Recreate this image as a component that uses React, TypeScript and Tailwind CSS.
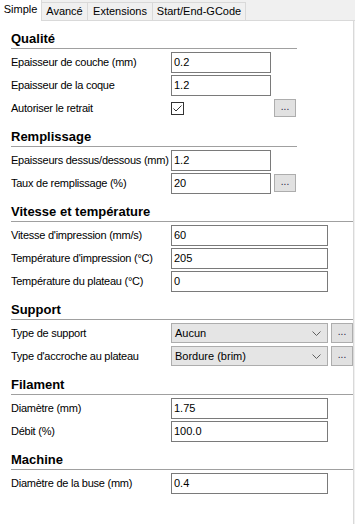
import { ReactNode } from 'react'

const font = { fontFamily: '"Liberation Sans", Arial, sans-serif' }

function Tabs() {
  const tabs = [
    { label: 'Avancé', w: 'w-[46px]' },
    { label: 'Extensions', w: 'w-[65px]' },
    { label: 'Start/End-GCode', w: 'w-[93px]' },
  ]
  return (
    <div className="flex items-end h-[21px] bg-[#f0f0f0]">
      <div className="w-[42px] h-[21px] bg-white border-r border-[#d9d9d9] flex items-center justify-center pb-[2px] text-[11px] text-black">
        Simple
      </div>
      {tabs.map((t) => (
        <div
          key={t.label}
          className={`${t.w} h-[19px] border-t border-r border-b border-[#d9d9d9] flex items-center justify-center text-[11px] text-black`}
        >
          {t.label}
        </div>
      ))}
      <div className="flex-1 h-full border-b border-[#d9d9d9]" />
    </div>
  )
}

function Section({ title, wide, children }: { title: string; wide?: boolean; children: ReactNode }) {
  return (
    <div className="mb-[7px]">
      <div
        className={`ml-[11px] ${wide ? 'w-[342px]' : 'w-[286px]'} h-[19px] border-b border-[#a0a0a0] flex items-end pb-[1px] text-[13px] font-bold leading-[16px] text-black`}
      >
        {title}
      </div>
      <div className="pt-[3px]">{children}</div>
    </div>
  )
}

function Row({ label, children }: { label: string; children: ReactNode }) {
  return (
    <div className="flex items-start h-[23px] pl-[11px]">
      <div className="w-[160px] h-[21px] flex items-center text-[11px] tracking-[-0.25px] text-black whitespace-nowrap">
        {label}
      </div>
      {children}
    </div>
  )
}

function Field({ value, wide }: { value: string; wide?: boolean }) {
  return (
    <div
      className={`${wide ? 'w-[157px]' : 'w-[100px]'} h-[21px] border border-[#7a7a7a] bg-white flex items-center pl-[2px] text-[11px] text-black`}
    >
      {value}
    </div>
  )
}

function DotsButton({ tall }: { tall?: boolean }) {
  return (
    <div
      className={`w-[22px] ${tall ? 'h-[20px] ml-[3px]' : 'h-[18px] ml-[3px] mt-[1px]'} border border-[#adadad] bg-[#e1e1e1] flex items-center justify-center text-[10px] leading-none text-[#1a1a40] pb-[3px]`}
    >
      ...
    </div>
  )
}

function Combo({ value }: { value: string }) {
  return (
    <div className="w-[157px] h-[20px] border border-[#adadad] bg-[#e5e5e5] flex items-center justify-between pl-[3px] pr-[6px] text-[11px] text-black">
      <span>{value}</span>
      <svg width="9" height="5" viewBox="0 0 9 5">
        <path d="M0.5 0.5 L4.5 4.5 L8.5 0.5" fill="none" stroke="#606060" strokeWidth="1" />
      </svg>
    </div>
  )
}

function Checkbox() {
  return (
    <div className="w-[100px] h-[21px] flex items-center">
      <div className="w-[13px] h-[13px] border border-[#333333] bg-white flex items-center justify-center">
        <svg width="11" height="11" viewBox="0 0 11 11">
          <path d="M1.5 5.5 L4 8 L9.5 2.5" fill="none" stroke="#333333" strokeWidth="1" />
        </svg>
      </div>
    </div>
  )
}

export default function App() {
  return (
    <div className="w-[355px] h-[524px] overflow-hidden bg-[#f0f0f0]" style={font}>
      <Tabs />
      <div className="w-[354px] h-[503px] bg-white border-r border-[#d9d9d9] pt-[9px]">
        <Section title="Qualité">
          <Row label="Epaisseur de couche (mm)">
            <Field value="0.2" />
          </Row>
          <Row label="Epaisseur de la coque">
            <Field value="1.2" />
          </Row>
          <Row label="Autoriser le retrait">
            <Checkbox />
            <DotsButton />
          </Row>
        </Section>

        <Section title="Remplissage">
          <Row label="Epaisseurs dessus/dessous (mm)">
            <Field value="1.2" />
          </Row>
          <Row label="Taux de remplissage (%)">
            <Field value="20" />
            <DotsButton />
          </Row>
        </Section>

        <Section title="Vitesse et température" wide>
          <Row label="Vitesse d'impression (mm/s)">
            <Field value="60" wide />
          </Row>
          <Row label="Température d'impression (°C)">
            <Field value="205" wide />
          </Row>
          <Row label="Température du plateau (°C)">
            <Field value="0" wide />
          </Row>
        </Section>

        <Section title="Support" wide>
          <Row label="Type de support">
            <Combo value="Aucun" />
            <DotsButton tall />
          </Row>
          <Row label="Type d'accroche au plateau">
            <Combo value="Bordure (brim)" />
            <DotsButton tall />
          </Row>
        </Section>

        <Section title="Filament" wide>
          <Row label="Diamètre (mm)">
            <Field value="1.75" wide />
          </Row>
          <Row label="Débit (%)">
            <Field value="100.0" wide />
          </Row>
        </Section>

        <Section title="Machine" wide>
          <Row label="Diamètre de la buse (mm)">
            <Field value="0.4" wide />
          </Row>
        </Section>
      </div>
    </div>
  )
}
